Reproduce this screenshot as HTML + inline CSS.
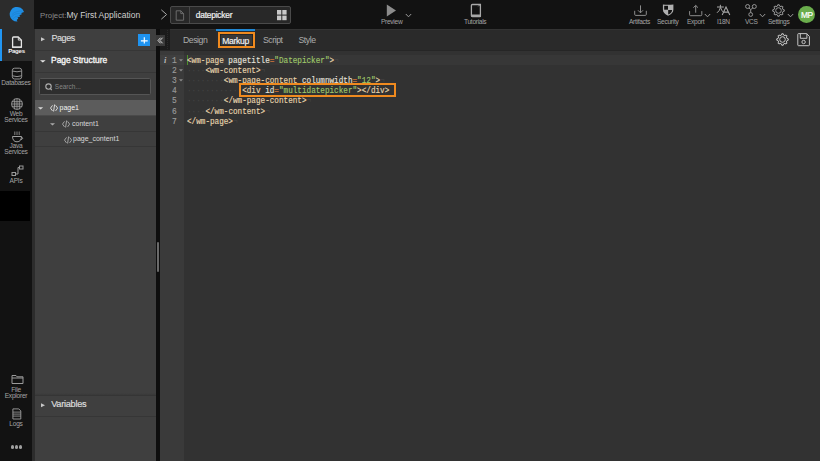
<!DOCTYPE html>
<html><head><meta charset="utf-8">
<style>
*{margin:0;padding:0;box-sizing:border-box}
html,body{width:820px;height:461px;overflow:hidden;background:#2b2b2b;font-family:"Liberation Sans",sans-serif;position:relative}
.a{position:absolute}
#top{left:0;top:0;width:820px;height:29px;background:#121212}
#logo{left:0;top:0;width:34px;height:29px;background:#2c2c2c}
#nav{left:0;top:29px;width:32px;height:432px;background:#121212}
#navgap{left:32px;top:29px;width:3px;height:432px;background:#2c2c2c}
#panel{left:35px;top:29px;width:121px;height:432px;background:#3f3f3f}
#divd{left:156px;top:29px;width:4px;height:432px;background:#0e0e0e}
#tabs{left:160px;top:29px;width:660px;height:21px;background:#2a2a2a;border-top:1px solid #333}
#editor{left:160px;top:50px;width:660px;height:411px;background:#323232}
#gutter{left:160px;top:51px;width:24px;height:410px;background:#3a3a3a}
.lbl{color:#a4a4a4;font-size:6.6px;letter-spacing:-0.3px;white-space:nowrap;line-height:7px;margin-top:-0.5px}
.nl{color:#a4a4a4;font-size:6.6px;letter-spacing:-0.25px;white-space:nowrap;line-height:6.5px;text-align:center;width:32px;left:0}
.code{font-family:"Liberation Mono",monospace;font-size:9px;white-space:pre;line-height:10.1px;transform:scaleX(0.8511);transform-origin:0 0;-webkit-text-stroke:0.15px currentColor}
.tag{color:#e8d6ae}.att{color:#e6e2dc}.eq{color:#d0773a}.str{color:#9fc86a}.ws{color:#444;-webkit-text-stroke:0}.eol{color:#474747;-webkit-text-stroke:0}
.tab{font-size:8.7px;letter-spacing:-0.45px;color:#acacac;top:35.2px;line-height:10px}
.row{left:35px;width:121px;height:15.5px;border-bottom:1px solid #363636}
.tt{font-size:7px;color:#d8d8d8;line-height:8px}
.ln{font-family:"Liberation Mono",monospace;font-size:9px;color:#9a9a9a;line-height:10.1px;white-space:pre;transform:scaleX(0.88);transform-origin:0 0;-webkit-text-stroke:0.15px currentColor}
</style></head><body>
<div class="a" id="top"></div>
<div class="a" id="logo"></div>
<svg class="a" style="left:5px;top:2px" width="25" height="25" viewBox="0 0 25 25">
<path fill="#1f8fe6" d="M19 10L16.3 11.1L16.8 12.2L14.4 13.3L15.2 14.4L12.5 15.5L13.3 16.5L11.7 17.9L12.5 19.6A7.35 7.35 0 1 1 19 10Z"/>
<g fill="none" stroke="#1a78c4" stroke-width="0.5" opacity="0.8"><path d="M7 12.5Q11 8.5 17.5 9.2"/><path d="M6.5 15Q9.5 11 15.5 11.5"/><path d="M7.5 17.5Q9.5 14 13.5 14"/></g>
</svg>
<div class="a" style="left:40px;top:9.5px;font-size:7.8px;color:#8a8a8a;white-space:nowrap;line-height:10px">Project:<span style="color:#d0d0d0;font-size:8.5px">My First Application</span></div>
<svg class="a" style="left:160px;top:8.5px" width="8" height="11" viewBox="0 0 8 11"><path d="M1.3 0.8L6.6 5.5L1.3 10.2" fill="none" stroke="#a8a8a8" stroke-width="1"/></svg>
<div class="a" style="left:170px;top:6px;width:121px;height:18px;border:1px solid #4a4a4a;border-radius:2px;background:#282828"></div>
<div class="a" style="left:189px;top:7px;width:1px;height:16px;background:#484848"></div>
<svg class="a" style="left:175px;top:9.5px" width="10" height="11" viewBox="0 0 10 11"><g fill="none" stroke="#7a7a7a" stroke-width="0.8" stroke-linejoin="round"><path d="M1.2 0.8H5.8L8.6 3.6V10.2H1.2Z"/><path d="M5.8 0.8V3.6H8.6"/></g></svg>
<div class="a" style="left:195.8px;top:9.6px;font-size:8.4px;letter-spacing:-0.22px;color:#f0f0f0;line-height:10px;-webkit-text-stroke:0.2px #f0f0f0">datepicker</div>
<svg class="a" style="left:276.6px;top:9.9px" width="10" height="11" viewBox="0 0 10 11"><g fill="#c8c8c8"><rect x="0" y="0" width="4.3" height="4.6"/><rect x="5.3" y="0" width="4.3" height="4.6"/><rect x="0" y="5.6" width="4.3" height="4.6"/><rect x="5.3" y="5.6" width="4.3" height="4.6"/></g></svg>

<!-- preview -->
<svg class="a" style="left:386px;top:4px" width="11" height="13" viewBox="0 0 11 13"><path d="M0.8 0.5L10 6.5L0.8 12.5Z" fill="#8c8c8c"/></svg>
<div class="a lbl" style="left:381px;top:18px">Preview</div>
<svg class="a" style="left:405px;top:13px" width="7" height="5" viewBox="0 0 7 5"><path d="M0.8 1L3.5 3.8L6.2 1" fill="none" stroke="#9a9a9a" stroke-width="1"/></svg>
<!-- tutorials -->
<svg class="a" style="left:470px;top:3px" width="12" height="15" viewBox="0 0 12 15"><g fill="none" stroke="#a8a8a8" stroke-width="1.3"><path d="M1.4 2.4Q1.4 1.5 2.4 1.5H10.4V13.2Q10.4 13.6 9.8 13.6H2.4Q1.4 13.6 1.4 12.6Z"/></g><path d="M1.2 11.4H10.8V13.9H2Q1.2 13.9 1.2 13Z" fill="#a8a8a8"/><path d="M8.3 3.3L9.8 1.8" stroke="#a8a8a8" stroke-width="0.9"/></svg>
<div class="a lbl" style="left:464px;top:18px">Tutorials</div>
<!-- artifacts -->
<svg class="a" style="left:633px;top:4px" width="14" height="13" viewBox="0 0 14 13"><g fill="none" stroke="#9a9a9a" stroke-width="0.9" stroke-linejoin="round"><path d="M1.7 6.8V10.4Q1.7 11.4 2.7 11.4H12.3Q13.3 11.4 13.3 10.4V6.8"/><path d="M7.5 1.4V8.6M5 6.3L7.5 8.8L10 6.3"/></g></svg>
<div class="a lbl" style="left:629px;top:18px">Artifacts</div>
<!-- security -->
<svg class="a" style="left:662px;top:4px" width="12" height="13" viewBox="0 0 12 13"><path d="M0.9 0.4Q6 1 11.4 0.4V5.5Q11.4 9.6 6.1 11.8Q0.9 9.6 0.9 5.5Z" fill="#b0b0b0"/><path d="M2.2 1.8H6V5.7H2.2Z" fill="#111"/><path d="M6.2 5.9H10.1Q9.9 8.9 6.2 10.5Z" fill="#111"/></svg>
<div class="a lbl" style="left:657px;top:18px">Security</div>
<!-- export -->
<svg class="a" style="left:689px;top:4px" width="14" height="13" viewBox="0 0 14 13"><g fill="none" stroke="#9a9a9a" stroke-width="0.9" stroke-linejoin="round"><path d="M0.6 7.1V10.7Q0.6 11.7 1.6 11.7H11.8Q12.8 11.7 12.8 10.7V7.1"/><path d="M6.7 8.7V1.5M4.4 3.7L6.7 1.4L9 3.7"/></g></svg>
<div class="a lbl" style="left:687px;top:18px">Export</div>
<svg class="a" style="left:704px;top:13px" width="7" height="5" viewBox="0 0 7 5"><path d="M0.8 1L3.5 3.8L6.2 1" fill="none" stroke="#9a9a9a" stroke-width="1"/></svg>
<!-- i18n -->
<svg class="a" style="left:716px;top:4px" width="15" height="12" viewBox="0 0 15 12"><g fill="none" stroke="#a8a8a8" stroke-width="1"><path d="M1 3H7.8M4.4 0.8V3.6Q3.6 7 1 8.8M4.6 3.6Q5.4 6.5 7.4 8.2"/><path d="M6.2 10.9L10 2.9L13.8 10.9M7.6 8.1H12.4" stroke-width="1.05"/></g></svg>
<div class="a lbl" style="left:717px;top:18px">I18N</div>
<!-- vcs -->
<svg class="a" style="left:744px;top:2px" width="14" height="16" viewBox="0 0 14 16"><g fill="none" stroke="#a0a0a0" stroke-width="0.9"><circle cx="3.6" cy="4.5" r="2"/><circle cx="10.3" cy="4.5" r="2"/><circle cx="6.7" cy="12.5" r="1.9"/><path d="M5 6L6.7 7.5L8.9 6M6.7 7.5V10.6"/></g></svg>
<div class="a lbl" style="left:745px;top:18px">VCS</div>
<svg class="a" style="left:759px;top:13px" width="7" height="5" viewBox="0 0 7 5"><path d="M0.8 1L3.5 3.8L6.2 1" fill="none" stroke="#9a9a9a" stroke-width="1"/></svg>
<!-- settings -->
<svg class="a" style="left:772px;top:4px" width="13" height="13" viewBox="0 0 13 13" id="gear1"><g fill="none" stroke="#9a9a9a" stroke-width="1" stroke-linejoin="round"><path d="M11.00 5.53 L12.26 5.78 L12.26 7.22 L11.00 7.47 L10.36 9.00 L11.08 10.06 L10.06 11.08 L9.00 10.36 L7.47 11.00 L7.22 12.26 L5.78 12.26 L5.53 11.00 L4.00 10.36 L2.94 11.08 L1.92 10.06 L2.64 9.00 L2.00 7.47 L0.74 7.22 L0.74 5.78 L2.00 5.53 L2.64 4.00 L1.92 2.94 L2.94 1.92 L4.00 2.64 L5.53 2.00 L5.78 0.74 L7.22 0.74 L7.47 2.00 L9.00 2.64 L10.06 1.92 L11.08 2.94 L10.36 4.00Z"/><circle cx="6.5" cy="6.5" r="2.8"/></g></svg>
<div class="a lbl" style="left:768px;top:18px">Settings</div>
<svg class="a" style="left:787px;top:13px" width="7" height="5" viewBox="0 0 7 5"><path d="M0.8 1L3.5 3.8L6.2 1" fill="none" stroke="#9a9a9a" stroke-width="1"/></svg>
<div class="a" style="left:798.1px;top:6.2px;width:16.7px;height:16.9px;border-radius:50%;background:#6aad4c"></div><div class="a" style="left:798.1px;top:6.8px;width:16.7px;height:16.9px;color:#fff;font-size:8.4px;letter-spacing:-0.55px;padding-left:0.55px;line-height:16.9px;text-align:center;-webkit-text-stroke:0.2px #fff">MP</div>

<!-- nav -->
<div class="a" id="nav"></div>
<div class="a" style="left:0;top:29px;width:32px;height:32px;background:#2c2c2c"></div>
<div class="a" style="left:0;top:29px;width:2px;height:32px;background:#2196f3"></div>
<svg class="a" style="left:11px;top:35.5px" width="12" height="13" viewBox="0 0 12 13"><g fill="none" stroke="#e6e6e6" stroke-width="1.3" stroke-linejoin="round"><path d="M1.6 2Q1.6 1 2.6 1H7.3L10.4 4.1V11.2H1.6Z"/><path d="M7.3 1V4.1H10.4" stroke-width="0.9"/></g><path d="M1.2 10.6H10.8V11.8H1.2Z" fill="#e6e6e6"/></svg>
<div class="a nl" style="top:47.8px;color:#f4f4f4;font-weight:bold;font-size:6.1px;padding-left:1px">Pages</div>
<svg class="a" style="left:11px;top:67px" width="12" height="13" viewBox="0 0 12 13"><g fill="none" stroke="#a0a0a0" stroke-width="0.9"><rect x="1.3" y="1.2" width="9.4" height="10.8" rx="2.3"/><path d="M1.3 4Q6 5.6 10.7 4M1.3 8.8Q6 10.4 10.7 8.8"/></g></svg>
<div class="a nl" style="top:80px">Databases</div>
<svg class="a" style="left:10.5px;top:98.4px" width="12" height="12" viewBox="0 0 12 12"><g fill="none" stroke="#a0a0a0" stroke-width="0.85"><circle cx="6" cy="6" r="5.4"/><path d="M0.8 3.7H11.2M0.6 6H11.4M0.8 8.3H11.2M3.7 0.8V11.2M6 0.6V11.4M8.3 0.8V11.2"/></g></svg>
<div class="a nl" style="top:110.8px">Web</div>
<div class="a nl" style="top:117px">Services</div>
<svg class="a" style="left:10.5px;top:130.5px" width="13" height="12" viewBox="0 0 13 12"><g fill="none" stroke="#a0a0a0" stroke-width="1"><path d="M1.5 5.5H10.5Q10.3 10.8 6 10.8Q1.7 10.8 1.5 5.5Z"/><path d="M10.3 6.5Q12 6.5 11.6 7.6Q11.2 8.6 9.8 8.4"/><path d="M3.8 0.5V4M6 0.5V4M8.2 0.5V4" stroke-width="0.8"/></g></svg>
<div class="a nl" style="top:143.2px">Java</div>
<div class="a nl" style="top:149.2px">Services</div>
<svg class="a" style="left:10.5px;top:165px" width="13" height="12" viewBox="0 0 13 12"><g fill="none" stroke="#9a9a9a" stroke-width="1"><rect x="1" y="7.5" width="3.5" height="3"/><rect x="8.5" y="1" width="3.5" height="3"/><path d="M4.5 9H7V2.5H8.5"/></g></svg>
<div class="a nl" style="top:177.5px">APIs</div>
<div class="a" style="left:0;top:191px;width:30px;height:30px;background:#000"></div>
<svg class="a" style="left:10.5px;top:374px" width="13" height="11" viewBox="0 0 13 11"><g fill="none" stroke="#9a9a9a" stroke-width="1"><path d="M1 1.5H5L6 2.8H12V9.5H1Z M1 4H12"/></g></svg>
<div class="a nl" style="top:386.5px">File</div>
<div class="a nl" style="top:392.5px">Explorer</div>
<svg class="a" style="left:12px;top:407.5px" width="10" height="12" viewBox="0 0 10 12"><g fill="none" stroke="#a0a0a0" stroke-width="0.9"><path d="M0.9 0.9H6.8L8.8 2.9V11H0.9Z"/><path d="M0.9 4.1H8.8M0.9 6.1H8.8M0.9 8.1H8.8" stroke-width="0.8"/></g></svg>
<div class="a nl" style="top:421px">Logs</div>
<div class="a" style="left:10.5px;top:445px;width:12px;height:5px;font-size:0">
<span class="a" style="left:0;top:0;width:3.5px;height:3.5px;border-radius:50%;background:#a0a0a0"></span>
<span class="a" style="left:4.2px;top:0;width:3.5px;height:3.5px;border-radius:50%;background:#a0a0a0"></span>
<span class="a" style="left:8.4px;top:0;width:3.5px;height:3.5px;border-radius:50%;background:#a0a0a0"></span>
</div>

<!-- panel -->
<div class="a" id="navgap"></div>
<div class="a" id="panel"></div>
<div class="a" style="left:35px;top:50px;width:121px;height:1px;background:#363636"></div>
<div class="a" style="left:35px;top:72px;width:121px;height:1px;background:#363636"></div>
<svg class="a" style="left:40.6px;top:36.8px" width="5" height="5" viewBox="0 0 5 5"><path d="M0 0.2L4 2.2L0 4.2Z" fill="#c8c8c8"/></svg>
<div class="a" style="left:51.4px;top:33.2px;font-size:9px;letter-spacing:-0.4px;color:#dcdcdc;line-height:10px;-webkit-text-stroke:0.15px #dcdcdc">Pages</div>
<div class="a" style="left:137.7px;top:33.7px;width:12.3px;height:12.3px;background:#1f93f0"></div>
<svg class="a" style="left:137.5px;top:33.5px" width="12.5" height="12.5" viewBox="0 0 12.5 12.5"><path d="M6.3 3.3V9.6M2.9 6.8H9.7" stroke="#fff" stroke-width="1.15"/></svg>
<svg class="a" style="left:39.5px;top:59.8px" width="6" height="3" viewBox="0 0 6 3"><path d="M0 0.2H5.6L2.8 2.4Z" fill="#e8e8e8"/></svg>
<div class="a" style="left:51px;top:54.7px;font-size:8.45px;color:#f4f4f4;line-height:10px;-webkit-text-stroke:0.35px #f4f4f4">Page Structure</div>
<div class="a" style="left:39px;top:78.2px;width:112px;height:16.7px;border:1px solid #555;border-radius:1.5px;background:#2e2e2e"></div>
<svg class="a" style="left:44.5px;top:82.5px" width="8" height="8" viewBox="0 0 8 8"><g fill="none" stroke="#b0b0b0" stroke-width="1.1"><circle cx="3.5" cy="3.6" r="2.7"/><path d="M5.4 5.6L6.8 7.2"/></g></svg>
<div class="a" style="left:54.8px;top:82.6px;font-size:6.5px;color:#858585;line-height:8px">Search...</div>

<div class="a row" style="top:100px;background:#5c5c5c;border-bottom-color:#4a4a4a"></div>
<div class="a row" style="top:115.5px;height:16.5px;background:#3f3f3f"></div>
<div class="a row" style="top:132px;height:14.8px;background:#3f3f3f"></div>
<svg class="a" style="left:37.6px;top:106.6px" width="6" height="3" viewBox="0 0 6 3"><path d="M0 0.2H5.2L2.6 2.6Z" fill="#d8d8d8"/></svg>
<svg class="a" style="left:50px;top:103.5px" width="8" height="8" viewBox="0 0 8 8" ><g fill="none" stroke="#e8e8e8" stroke-width="0.9"><path d="M2.5 1.4L0.5 4.1L2.5 6.9M5.6 1.4L7.6 4.1L5.6 6.9M4.6 0.5L3.6 7.5"/></g></svg>
<div class="a tt" style="left:59.5px;top:103.5px;color:#f4f4f4">page1</div>
<svg class="a" style="left:50px;top:122.8px" width="6" height="3" viewBox="0 0 6 3"><path d="M0 0.2H5L2.5 2.6Z" fill="#aaa"/></svg>
<svg class="a" style="left:62px;top:120.2px" width="8" height="8" viewBox="0 0 8 8" ><g fill="none" stroke="#b0b0b0" stroke-width="0.9"><path d="M2.5 1.4L0.5 4.1L2.5 6.9M5.6 1.4L7.6 4.1L5.6 6.9M4.6 0.5L3.6 7.5"/></g></svg>
<div class="a tt" style="left:72px;top:119.8px">content1</div>
<svg class="a" style="left:63.5px;top:135.5px" width="8" height="8" viewBox="0 0 8 8" ><g fill="none" stroke="#b0b0b0" stroke-width="0.9"><path d="M2.5 1.4L0.5 4.1L2.5 6.9M5.6 1.4L7.6 4.1L5.6 6.9M4.6 0.5L3.6 7.5"/></g></svg>
<div class="a tt" style="left:73px;top:135px">page_content1</div>

<div class="a" style="left:35px;top:392.5px;width:121px;height:2.8px;background:linear-gradient(rgba(0,0,0,0),rgba(0,0,0,0.1))"></div>
<div class="a" style="left:35px;top:395.2px;width:121px;height:1px;background:#353535"></div>
<div class="a" style="left:35px;top:415.8px;width:121px;height:1px;background:#363636"></div>
<svg class="a" style="left:40.7px;top:402.8px" width="5" height="5" viewBox="0 0 5 5"><path d="M0 0.2L4 2.2L0 4.2Z" fill="#c8c8c8"/></svg>
<div class="a" style="left:51.2px;top:399.3px;font-size:9.2px;letter-spacing:-0.27px;color:#dcdcdc;line-height:10px;-webkit-text-stroke:0.2px #dcdcdc">Variables</div>

<div class="a" id="divd"></div>
<div class="a" style="left:156.7px;top:241.6px;width:2.3px;height:30.5px;background:#6a6a6a;border-radius:1px"></div>

<!-- tabs -->
<div class="a" id="tabs"></div>
<div class="a" style="left:160px;top:29px;width:10px;height:21px;background:#1b1b1b"></div>
<div class="a" style="left:167px;top:30px;width:1px;height:19px;background:repeating-linear-gradient(#2a2a2a 0 1px,transparent 1px 2px)"></div>
<div class="a" style="left:156px;top:35px;width:9px;height:11px;background:#3a3a3a"></div>
<svg class="a" style="left:157px;top:37px" width="7" height="7" viewBox="0 0 7 7"><path d="M3.6 0.7L1 3.5L3.6 6.3M5.6 0.7L3 3.5L5.6 6.3" fill="none" stroke="#d8d8d8" stroke-width="1"/></svg>
<div class="a" style="left:215.8px;top:29px;width:39.3px;height:21px;background:#2c2c2c"></div>
<div class="a" style="left:215.8px;top:29px;width:39.3px;height:2px;background:#2188d4"></div>
<div class="a tab" style="left:183px">Design</div>

<div class="a tab" style="left:263px">Script</div>
<div class="a tab" style="left:298.5px">Style</div>
<div class="a" style="left:218px;top:31.8px;width:37.1px;height:16.2px;border:2.2px solid #f08a1e;background:#383838;box-shadow:inset 0 0 0 0.8px #222"></div>
<div class="a tab" style="left:222.2px;color:#f4f4f4;font-size:8.6px;letter-spacing:-0.3px;top:35.6px;-webkit-text-stroke:0.15px #f4f4f4">Markup</div>
<svg class="a" style="left:775.5px;top:33px" width="13" height="13" viewBox="0 0 13 13" id="gear2"><g fill="none" stroke="#c8c8c8" stroke-width="1" stroke-linejoin="round"><path d="M11.00 5.53 L12.26 5.78 L12.26 7.22 L11.00 7.47 L10.36 9.00 L11.08 10.06 L10.06 11.08 L9.00 10.36 L7.47 11.00 L7.22 12.26 L5.78 12.26 L5.53 11.00 L4.00 10.36 L2.94 11.08 L1.92 10.06 L2.64 9.00 L2.00 7.47 L0.74 7.22 L0.74 5.78 L2.00 5.53 L2.64 4.00 L1.92 2.94 L2.94 1.92 L4.00 2.64 L5.53 2.00 L5.78 0.74 L7.22 0.74 L7.47 2.00 L9.00 2.64 L10.06 1.92 L11.08 2.94 L10.36 4.00Z"/><circle cx="6.5" cy="6.5" r="2.8"/></g></svg>
<svg class="a" style="left:796.5px;top:33px" width="14" height="14" viewBox="0 0 14 14"><g fill="none" stroke="#c4c4c4" stroke-width="1" stroke-linejoin="round"><path d="M0.8 1.3Q0.8 0.6 1.5 0.6H9.6L12.4 3.4V12Q12.4 12.7 11.7 12.7H1.5Q0.8 12.7 0.8 12Z"/><path d="M3.3 0.6V5.3H9.9V0.6"/><circle cx="6.6" cy="9" r="1.7"/></g></svg>

<!-- editor -->
<div class="a" id="editor"></div>
<div class="a" id="gutter"></div>
<div class="a" style="left:160px;top:50px;width:660px;height:1px;background:#262626"></div>
<div class="a" style="left:160px;top:54.6px;width:24px;height:10.3px;background:#3f3f3f"></div>
<div class="a" style="left:184px;top:54.6px;width:636px;height:10.3px;background:#373737"></div>
<div class="a ln" style="left:171.8px;top:55.80px">1</div>
<div class="a ln" style="left:171.8px;top:65.97px">2</div>
<div class="a ln" style="left:171.8px;top:76.14px">3</div>
<div class="a ln" style="left:171.8px;top:86.31px">4</div>
<div class="a ln" style="left:171.8px;top:96.48px">5</div>
<div class="a ln" style="left:171.8px;top:106.65px">6</div>
<div class="a ln" style="left:171.8px;top:116.82px">7</div>

<div class="a" style="left:164px;top:55.3px;font-family:'Liberation Serif',serif;font-style:italic;font-weight:bold;font-size:8.5px;color:#b8b8b8;line-height:10px">i</div>
<svg class="a" style="left:178.5px;top:58.60px" width="4" height="3" viewBox="0 0 4 3"><path d="M0 0.3H4L2 2.5Z" fill="#8a8a8a"/></svg><svg class="a" style="left:178.5px;top:68.77px" width="4" height="3" viewBox="0 0 4 3"><path d="M0 0.3H4L2 2.5Z" fill="#8a8a8a"/></svg><svg class="a" style="left:178.5px;top:78.94px" width="4" height="3" viewBox="0 0 4 3"><path d="M0 0.3H4L2 2.5Z" fill="#8a8a8a"/></svg>
<div class="a" style="left:187px;top:54.5px;width:1px;height:10.1px;background:#4f8f2a"></div>
<div class="a code" style="left:187px;top:55.80px"><span class="tag">&lt;wm-page </span><span class="att">pagetitle</span><span class="eq">=</span><span class="str">"Datepicker"</span><span class="tag">&gt;</span><span class="eol">¬</span></div>
<div class="a code" style="left:187px;top:65.97px"><span class="ws">····</span><span class="tag">&lt;wm-content&gt;</span><span class="eol">¬</span></div>
<div class="a code" style="left:187px;top:76.14px"><span class="ws">········</span><span class="tag">&lt;wm-page-content </span><span class="att">columnwidth</span><span class="eq">=</span><span class="str">"12"</span><span class="tag">&gt;</span><span class="eol">¬</span></div>
<div class="a code" style="left:187px;top:86.31px"><span class="ws">············</span><span class="tag">&lt;div </span><span class="att">id</span><span class="eq">=</span><span class="str">"multidatepicker"</span><span class="tag">&gt;&lt;/div&gt;</span></div>
<div class="a code" style="left:187px;top:96.48px"><span class="ws">········</span><span class="tag">&lt;/wm-page-content&gt;</span><span class="eol">¬</span></div>
<div class="a code" style="left:187px;top:106.65px"><span class="ws">····</span><span class="tag">&lt;/wm-content&gt;</span><span class="eol">¬</span></div>
<div class="a code" style="left:187px;top:116.82px"><span class="tag">&lt;/wm-page&gt;</span><span class="eol">¬</span></div>

<div class="a" style="left:239px;top:83px;width:157px;height:14px;border:2.3px solid #ef8a1f"></div>
</body></html>
